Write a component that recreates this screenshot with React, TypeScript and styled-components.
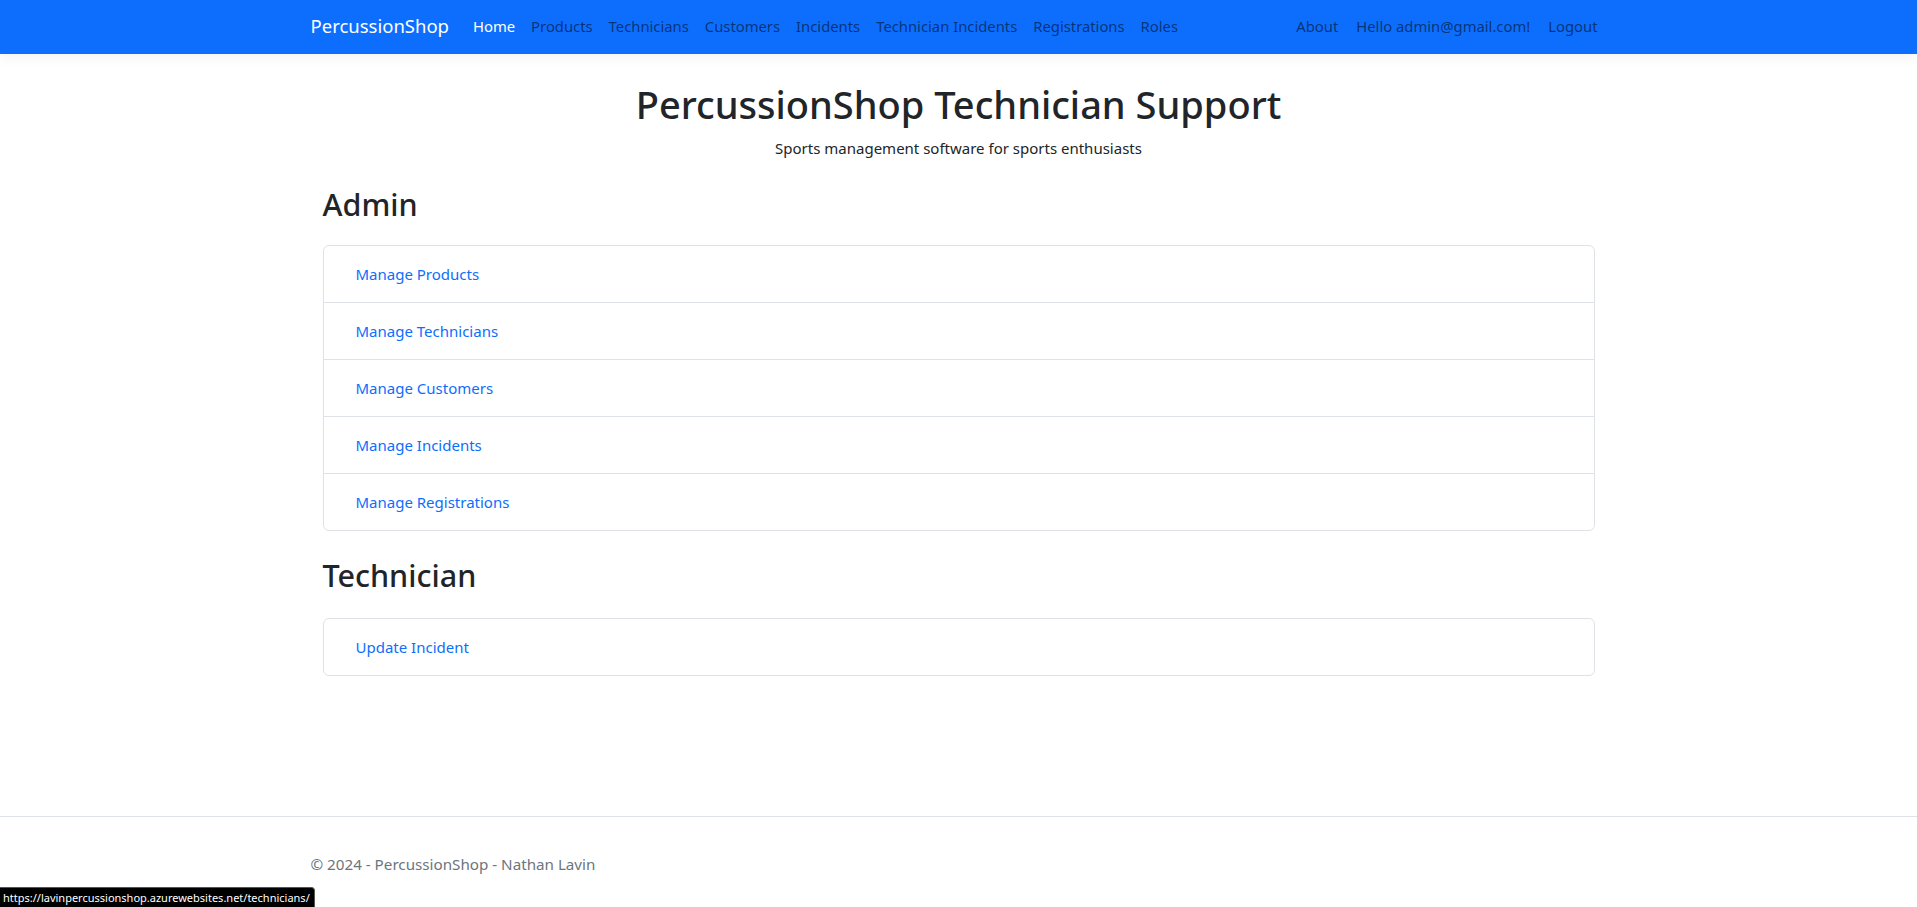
import React from "react";
import styled, { createGlobalStyle } from "styled-components";

const FONT = `"Segoe UI", "Noto Sans", "Liberation Sans", sans-serif`;

const GlobalStyle = createGlobalStyle`
  html, body { margin: 0; padding: 0; }
  body {
    font-family: ${FONT};
    font-size: 15px;
    line-height: 24px;
    color: #212529;
    background: #fff;
  }
  * { box-sizing: border-box; }
`;

const Page = styled.div`
  min-height: 907px;
  display: flex;
  flex-direction: column;
`;

const NavBar = styled.nav`
  background: #0d6efd;
  height: 54px;
  box-shadow: 0 0.25rem 0.75rem rgba(0, 0, 0, 0.05);
  display: flex;
  justify-content: center;
`;

const NavContainer = styled.div`
  width: 1320px;
  padding: 0 12px 2px;
  display: flex;
  align-items: center;
`;

const Brand = styled.a`
  font-size: 18.5px;
  color: #fff;
  margin-right: 16px;
  text-decoration: none;
  line-height: 30px;
`;

const NavList = styled.ul<{ $grow?: boolean }>`
  list-style: none;
  margin: 0;
  padding: 0;
  display: flex;
  flex: ${(p) => (p.$grow ? 1 : "none")};
`;

const NavLink = styled.a<{ $active?: boolean; $pad?: number }>`
  display: block;
  padding: 8px ${(p) => p.$pad ?? 8}px;
  font-size: 14.8px;
  line-height: 24px;
  color: ${(p) => (p.$active ? "#fff" : "rgba(0,0,0,0.55)")};
  text-decoration: none;
`;

const Main = styled.main`
  flex: 1;
  display: flex;
  justify-content: center;
`;

const Content = styled.div`
  width: 1320px;
  padding: 0 24px;
`;

const Hero = styled.div`
  text-align: center;
  padding-top: 26px;
`;

const Title = styled.h1`
  font-size: 38px;
  font-weight: 500;
  line-height: 48px;
  margin: 0 0 8px;
`;

const Lead = styled.p`
  margin: 0;
  font-size: 15px;
  line-height: 24px;
`;

const SectionTitle = styled.h2<{ $top: number; $bottom: number }>`
  font-size: 30.5px;
  font-weight: 500;
  line-height: 38px;
  margin: ${(p) => p.$top}px 0 ${(p) => p.$bottom}px;
`;

const ListGroup = styled.ul`
  list-style: none;
  margin: 0;
  padding: 0;
  border: 1px solid #dee2e6;
  border-radius: 6px;
  overflow: hidden;
`;

const ListItem = styled.li`
  padding: 0 16px;
  & + & {
    border-top: 1px solid #dee2e6;
  }
`;

const ItemLink = styled.a`
  display: block;
  padding: 16px 16px;
  line-height: 24px;
  color: #0d6efd;
  text-decoration: none;
`;

const Footer = styled.footer`
  border-top: 1px solid #dee2e6;
  height: 91px;
  display: flex;
  justify-content: center;
  color: #6c757d;
`;

const FooterInner = styled.div`
  width: 1320px;
  padding: 17px 12px 0;
  line-height: 60px;
  font-size: 15.2px;
`;

const StatusBubble = styled.div`
  position: fixed;
  left: 0;
  bottom: 0;
  height: 20px;
  padding: 0 4px 0 3px;
  background: #000;
  color: #fff;
  font-size: 11px;
  line-height: 20px;
  border-top-right-radius: 4px;
  border-top: 1px solid #555;
  border-right: 1px solid #555;
`;

const navItems = [
  "Products",
  "Technicians",
  "Customers",
  "Incidents",
  "Technician Incidents",
  "Registrations",
  "Roles",
];

const userItems = ["About", "Hello admin@gmail.com!", "Logout"];

const admin = [
  "Manage Products",
  "Manage Technicians",
  "Manage Customers",
  "Manage Incidents",
  "Manage Registrations",
];

export default function App() {
  return (
    <>
      <GlobalStyle />
      <Page>
        <NavBar>
          <NavContainer>
            <Brand href="#">PercussionShop</Brand>
            <NavList $grow>
              <li>
                <NavLink href="#" $active>
                  Home
                </NavLink>
              </li>
              {navItems.map((n) => (
                <li key={n}>
                  <NavLink href="#">{n}</NavLink>
                </li>
              ))}
            </NavList>
            <NavList>
              {userItems.map((n) => (
                <li key={n}>
                  <NavLink href="#" $pad={9}>
                    {n}
                  </NavLink>
                </li>
              ))}
            </NavList>
          </NavContainer>
        </NavBar>
        <Main>
          <Content>
            <Hero>
              <Title>PercussionShop Technician Support</Title>
              <Lead>Sports management software for sports enthusiasts</Lead>
            </Hero>
            <SectionTitle $top={25} $bottom={22}>
              Admin
            </SectionTitle>
            <ListGroup>
              {admin.map((a) => (
                <ListItem key={a}>
                  <ItemLink href="#">{a}</ItemLink>
                </ListItem>
              ))}
            </ListGroup>
            <SectionTitle $top={25} $bottom={24}>
              Technician
            </SectionTitle>
            <ListGroup>
              <ListItem>
                <ItemLink href="#">Update Incident</ItemLink>
              </ListItem>
            </ListGroup>
          </Content>
        </Main>
        <Footer>
          <FooterInner>© 2024 - PercussionShop - Nathan Lavin</FooterInner>
        </Footer>
      </Page>
      <StatusBubble>https://lavinpercussionshop.azurewebsites.net/technicians/</StatusBubble>
    </>
  );
}
